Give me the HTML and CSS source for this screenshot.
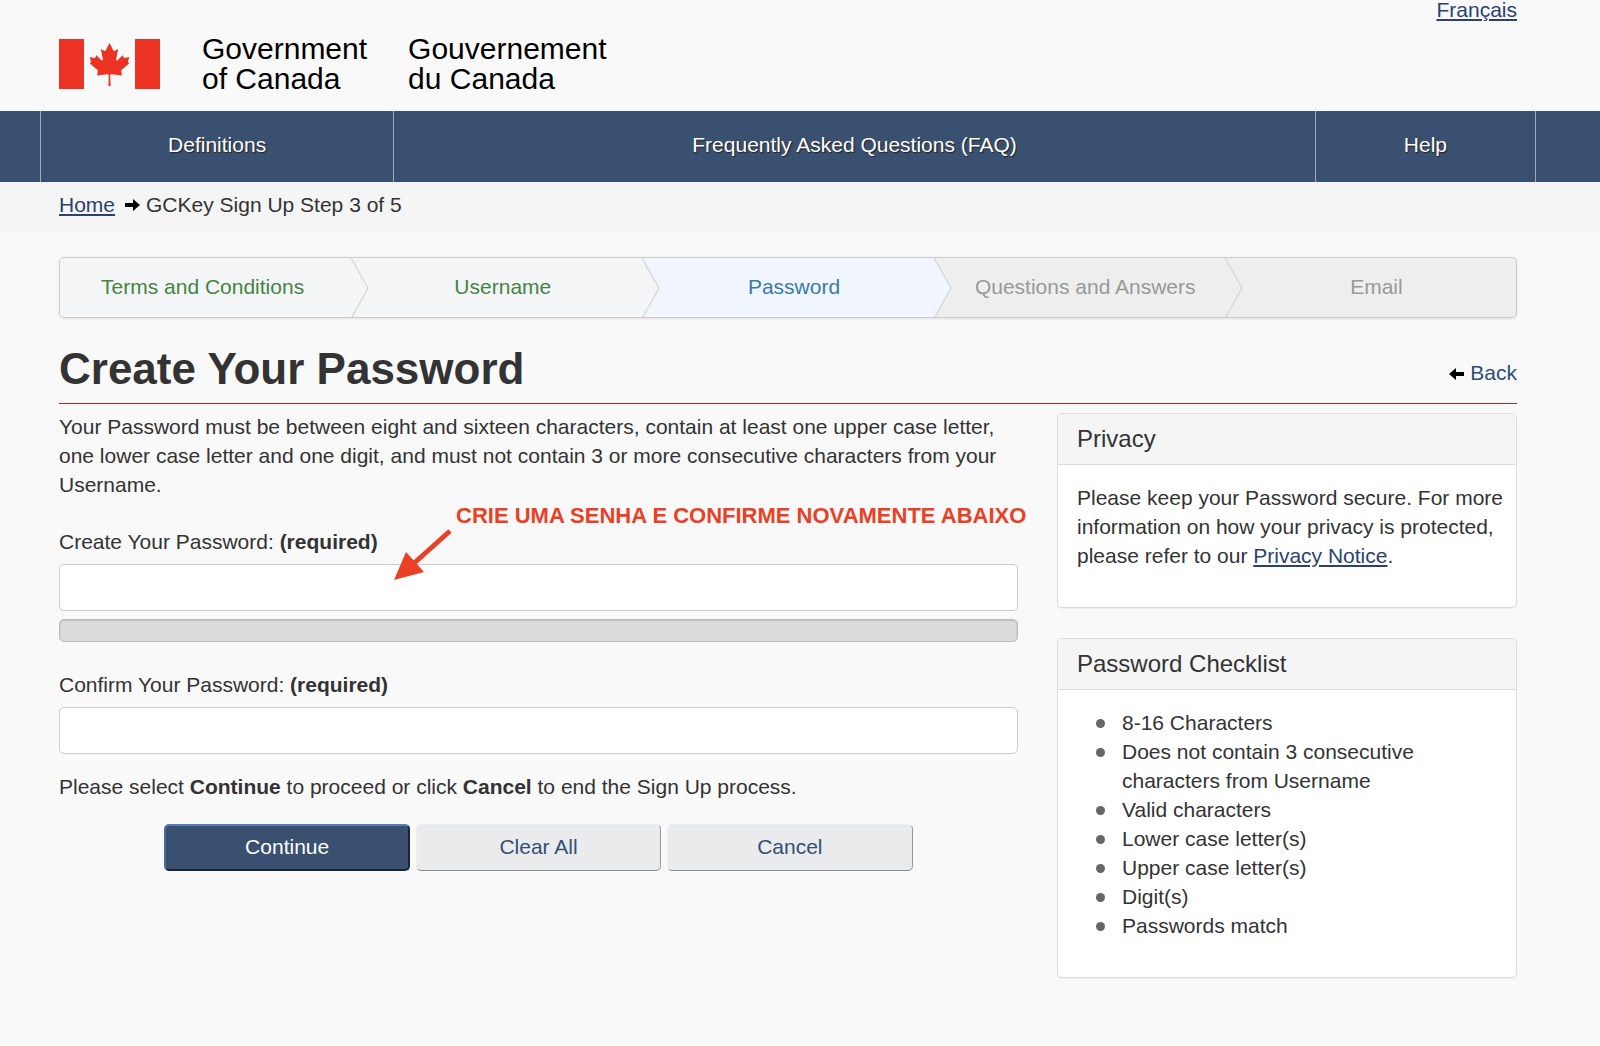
FILE: index.html
```html
<!DOCTYPE html>
<html lang="en">
<head>
<meta charset="UTF-8">
<meta name="viewport" content="width=device-width, initial-scale=1.0">
<title>Create Your Password</title>
<link rel="stylesheet" href="styles.css">
</head>
<body>

<header class="header wrap">
    <div class="brand">
        <svg class="flag" width="101" height="50" viewBox="0 0 101 50" aria-hidden="true">
            <rect width="25" height="50" fill="#eb3223"/>
            <rect x="76" width="25" height="50" fill="#eb3223"/>
            <path fill="#eb3223" d="M50.500 4 L46.800 11.300 Q46.200 12.200 45.200 11.700 L41.800 9.900 L43.900 20.500 Q43.900 22 42.500 21.200 L37.300 16.200 L36.200 18.700 Q35.900 19.200 35.200 19.100 L30.700 18.100 L32 22.600 Q32.200 23.300 31.600 23.600 L30.600 24.200 L38.500 31 Q39 31.500 38.800 32.200 L38 36.600 L48.500 35.300 Q49.700 35.200 49.800 36.200 L49.400 47 L51.600 47 L51.200 36.200 Q51.300 35.200 52.500 35.300 L63 36.600 L62.200 32.200 Q62 31.500 62.500 31 L70.400 24.200 L69.400 23.600 Q68.800 23.300 69 22.600 L70.300 18.100 L65.800 19.100 Q65.100 19.200 64.800 18.700 L63.700 16.200 L58.500 21.200 Q57.100 22 57.100 20.500 L59.200 9.900 L55.800 11.700 Q54.800 12.200 54.200 11.300 Z"/>
        </svg>
        <div class="brand-name">Government<br>of Canada</div>
        <div class="brand-name">Gouvernement<br>du Canada</div>
    </div>
    <a class="lang" href="#" lang="fr">Français</a>
</header>

<nav class="menu">
    <a href="#">Definitions</a>
    <a href="#">Frequently Asked Questions (FAQ)</a>
    <a href="#">Help</a>
</nav>

<div class="breadcrumb wrap">
    <a href="#">Home</a>
    <svg class="arrow" width="15" height="12" viewBox="0 0 15 12" aria-hidden="true"><path d="M0 4h8V0l7 6-7 6V8H0z"/></svg>
    <span>GCKey Sign Up Step 3 of 5</span>
</div>

<main class="wrap">
    <ol class="steps">
        <li class="done"><span>Terms and Conditions</span><svg width="18" height="59" viewBox="0 0 18 59"><path d="M0 0L17 30L1 59"/></svg></li>
        <li class="done"><span>Username</span><svg width="18" height="59" viewBox="0 0 18 59"><path d="M0 0L17 30L1 59"/></svg></li>
        <li class="current"><span>Password</span><svg width="18" height="59" viewBox="0 0 18 59"><path d="M0 0L17 30L1 59"/></svg></li>
        <li><span>Questions and Answers</span><svg width="18" height="59" viewBox="0 0 18 59"><path d="M0 0L17 30L1 59"/></svg></li>
        <li><span>Email</span></li>
    </ol>

    <div class="title">
        <h1>Create Your Password</h1>
        <a class="back" href="#"><svg class="arrow" width="15" height="12" viewBox="0 0 15 12" aria-hidden="true"><path d="M15 4H7V0L0 6l7 6V8h8z"/></svg>Back</a>
    </div>

    <div class="columns">
        <form class="form">
            <p class="intro">Your Password must be between eight and sixteen characters, contain at least one upper case letter, one lower case letter and one digit, and must not contain 3 or more consecutive characters from your Username.</p>

            <label for="password">Create Your Password: <strong>(required)</strong></label>
            <input type="password" id="password">
            <div class="strength"></div>

            <label for="confirm">Confirm Your Password: <strong>(required)</strong></label>
            <input type="password" id="confirm">

            <p class="hint">Please select <strong>Continue</strong> to proceed or click <strong>Cancel</strong> to end the Sign Up process.</p>

            <div class="buttons">
                <button type="button" class="primary">Continue</button>
                <button type="button">Clear All</button>
                <button type="button">Cancel</button>
            </div>

            <div class="note">CRIE UMA SENHA E CONFIRME NOVAMENTE ABAIXO</div>
            <svg class="pointer" width="60" height="52" viewBox="0 0 60 52" aria-hidden="true">
                <path d="M56 2L18 36" stroke="#e94126" stroke-width="5"/>
                <path d="M0 51L12 23L30 43z" fill="#e94126"/>
            </svg>
        </form>

        <aside>
            <section class="panel">
                <h2>Privacy</h2>
                <div class="panel-body">
                    <p>Please keep your Password secure. For more information on how your privacy is protected, please refer to our <a href="#">Privacy Notice</a>.</p>
                </div>
            </section>
            <section class="panel">
                <h2>Password Checklist</h2>
                <div class="panel-body">
                    <ul>
                        <li>8-16 Characters</li>
                        <li>Does not contain 3 consecutive characters from Username</li>
                        <li>Valid characters</li>
                        <li>Lower case letter(s)</li>
                        <li>Upper case letter(s)</li>
                        <li>Digit(s)</li>
                        <li>Passwords match</li>
                    </ul>
                </div>
            </section>
        </aside>
    </div>
</main>

</body>
</html>
```
FILE: styles.css
```css
* {
    box-sizing: border-box;
}
body {
    margin: 0;
    background-color: #f9f9f9;
    color: #333;
    font-family: "Helvetica Neue", "Liberation Sans", Arial, sans-serif;
    font-size: 21px;
    line-height: 29px;
}
a {
    color: #2b4270;
}
p, ul, ol, h1, h2 {
    margin: 0;
    padding: 0;
    font-weight: normal;
}
.wrap {
    padding-left: 59px;
    padding-right: 83px;
}

/* header */
.header {
    display: flex;
    justify-content: space-between;
    align-items: flex-start;
    height: 111px;
}
.brand {
    display: flex;
    padding-top: 34px;
}
.flag {
    margin-top: 5px;
    margin-right: 42px;
}
.brand-name {
    margin-right: 41px;
    color: #000;
    font-size: 30px;
    line-height: 30px;
}
.lang {
    margin-top: -5px;
}

.menu {
    display: grid;
    grid-template-columns: 353fr 921fr 221fr;
    padding-left: 40px;
    padding-right: 64px;
    background-color: #3a5070;
}
.menu a {
    padding: 19px 0 23px;
    border-left: 1px solid #a5abb3;
    color: #fff;
    text-align: center;
    text-decoration: none;
    text-shadow: 1px 1px 1px #222;
}
.menu a:last-child {
    border-right: 1px solid #a5abb3;
}

.breadcrumb {
    display: flex;
    align-items: center;
    padding-top: 8px;
    padding-bottom: 13px;
    background-color: #f5f5f5;
}
.breadcrumb .arrow {
    margin-left: 10px;
    margin-right: 6px;
}

/* progress steps */
.steps {
    display: flex;
    overflow: hidden;
    margin-top: 25px;
    border: 1px solid #ccc;
    border-radius: 5px;
    box-shadow: 0 1px 3px rgba(0, 0, 0, 0.1);
    background-color: #eee;
    list-style: none;
}
.steps li {
    display: flex;
    flex: 1 1 0;
    align-items: center;
    height: 59px;
    color: #999;
    text-align: center;
}
.steps span {
    flex: 1;
    padding-left: 12px;
    padding-bottom: 2px;
}
.steps li:first-child span {
    padding-left: 0;
    padding-right: 6px;
}
.steps svg {
    z-index: 1;
    flex: none;
    margin-right: -18px;
    fill: #eee;
    stroke: #ccc;
}
.steps .done {
    background-color: #f3f5f6;
    color: #458443;
}
.steps .done svg {
    fill: #f3f5f6;
}
.steps .current {
    background-color: #f1f5fd;
    color: #3a7ba6;
}
.steps .current svg {
    fill: #f1f5fd;
}

.title {
    display: flex;
    justify-content: space-between;
    align-items: center;
    margin-top: 24px;
    padding-bottom: 8px;
    border-bottom: 1px solid #b3282d;
}
h1 {
    font-size: 44px;
    font-weight: bold;
    line-height: 53px;
}
.back {
    margin-top: 8px;
    color: #2b4e75;
    text-decoration: none;
}
.back .arrow {
    margin-right: 6px;
}

.columns {
    display: grid;
    grid-template-columns: 959fr 460fr;
    gap: 39px;
    align-items: start;
    padding-top: 8px;
}

/* form */
.form {
    position: relative;
}
.intro {
    margin-bottom: 28px;
}
label {
    display: block;
}
input {
    display: block;
    width: 100%;
    height: 47px;
    margin-top: 8px;
    padding: 8px 12px;
    border: 1px solid #ccc;
    border-radius: 5px;
    background-color: #fff;
    font: inherit;
}
.strength {
    height: 23px;
    margin-top: 8px;
    margin-bottom: 28px;
    border: 1px solid #bbb;
    border-radius: 5px;
    background-color: #dcdcdc;
    box-shadow: inset 0 1px 2px rgba(0, 0, 0, 0.15);
}
.hint {
    margin-top: 18px;
}
.buttons {
    display: grid;
    grid-template-columns: 1fr 1fr 1fr;
    gap: 6px;
    width: 78%;
    margin: 23px auto 0;
}
button {
    height: 47px;
    padding: 0 0 3px;
    border: 1px solid;
    border-color: #eff0f1 #999 #888 #eff0f1;
    border-radius: 5px;
    background-color: #eaebed;
    color: #335075;
    font: inherit;
}
button.primary {
    border-width: 2px;
    border-color: #5a7cb5 #16243c #16243c #4a699c;
    background-color: #3a5070;
    color: #fff;
}

/* red note over the form */
.note {
    position: absolute;
    top: 89px;
    left: 397px;
    color: #e94126;
    font-size: 22px;
    font-weight: bold;
    white-space: nowrap;
}
.pointer {
    position: absolute;
    top: 117px;
    left: 335px;
}

/* sidebar */
.panel {
    margin-top: 1px;
    margin-bottom: 30px;
    border: 1px solid #ddd;
    border-radius: 5px;
    background-color: #fff;
    box-shadow: 0 1px 1px rgba(0, 0, 0, 0.05);
}
.panel h2 {
    padding: 10px 19px 11px;
    border-bottom: 1px solid #ddd;
    border-radius: 4px 4px 0 0;
    background-color: #f5f5f5;
    font-size: 24px;
}
.panel-body {
    padding: 18px 4px 37px 19px;
}
.panel ul {
    padding-left: 19px;
    padding-right: 60px;
    list-style: none;
}
.panel li {
    display: flex;
}
.panel li::before {
    content: "";
    flex: none;
    width: 9px;
    height: 9px;
    margin-top: 11px;
    margin-right: 17px;
    border-radius: 50%;
    background-color: #666;
}
```
